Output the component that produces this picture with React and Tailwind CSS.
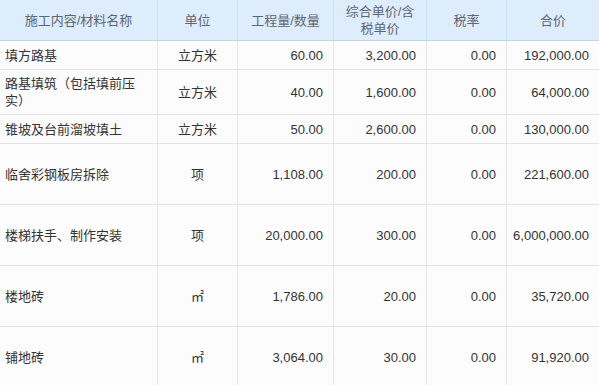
import React from "react";

const cols = [
  { w: "w-[158px]", align: "left" },
  { w: "w-[80px]", align: "center" },
  { w: "w-[96px]", align: "right" },
  { w: "w-[93px]", align: "right" },
  { w: "w-[80px]", align: "right" },
  { w: "flex-1", align: "right" },
];

const headers = ["施工内容/材料名称", "单位", "工程量/数量", "综合单价/含税单价", "税率", "合价"];

const rows = [
  { h: "h-[29px]", d: ["填方路基", "立方米", "60.00", "3,200.00", "0.00", "192,000.00"] },
  { h: "h-[45px]", d: ["路基填筑（包括填前压实）", "立方米", "40.00", "1,600.00", "0.00", "64,000.00"] },
  { h: "h-[29px]", d: ["锥坡及台前溜坡填土", "立方米", "50.00", "2,600.00", "0.00", "130,000.00"] },
  { h: "h-[61px]", d: ["临舍彩钢板房拆除", "项", "1,108.00", "200.00", "0.00", "221,600.00"] },
  { h: "h-[61px]", d: ["楼梯扶手、制作安装", "项", "20,000.00", "300.00", "0.00", "6,000,000.00"] },
  { h: "h-[61px]", d: ["楼地砖", "㎡", "1,786.00", "20.00", "0.00", "35,720.00"] },
  { h: "h-[61px]", d: ["铺地砖", "㎡", "3,064.00", "30.00", "0.00", "91,920.00"] },
];

const alignCls = {
  left: "justify-start text-left pl-[5px] pr-[12px]",
  center: "justify-center text-center px-[5px]",
  right: "justify-end text-right pl-[5px] pr-[10px]",
};

export default function App() {
  return (
    <div
      className="w-[599px] h-[385px] overflow-hidden bg-white text-[13px] text-[#333]"
      style={{ fontFamily: '"Liberation Sans", "Noto Sans CJK SC", sans-serif' }}
    >
      <div className="flex h-[41px] bg-[#ddedfc] border-b border-[#bed7ee] text-[#5d6670]">
        {headers.map((t, i) => (
          <div
            key={i}
            className={`${cols[i].w} flex items-center justify-center text-center px-[8px] break-all leading-[17px] ${
              i < 5 ? "border-r border-[#c9dff2]" : ""
            }`}
          >
            {t}
          </div>
        ))}
      </div>
      {rows.map((r, ri) => (
        <div key={ri} className={`flex ${r.h} border-b border-[#e3e3e3] bg-[#fcfcfc]`}>
          {r.d.map((t, i) => (
            <div
              key={i}
              className={`${cols[i].w} flex items-center leading-[17px] ${alignCls[cols[i].align]} ${
                i === 5 ? "pr-[7px]" : "border-r border-[#e3e3e3]"
              }`}
            >
              {t}
            </div>
          ))}
        </div>
      ))}
    </div>
  );
}
